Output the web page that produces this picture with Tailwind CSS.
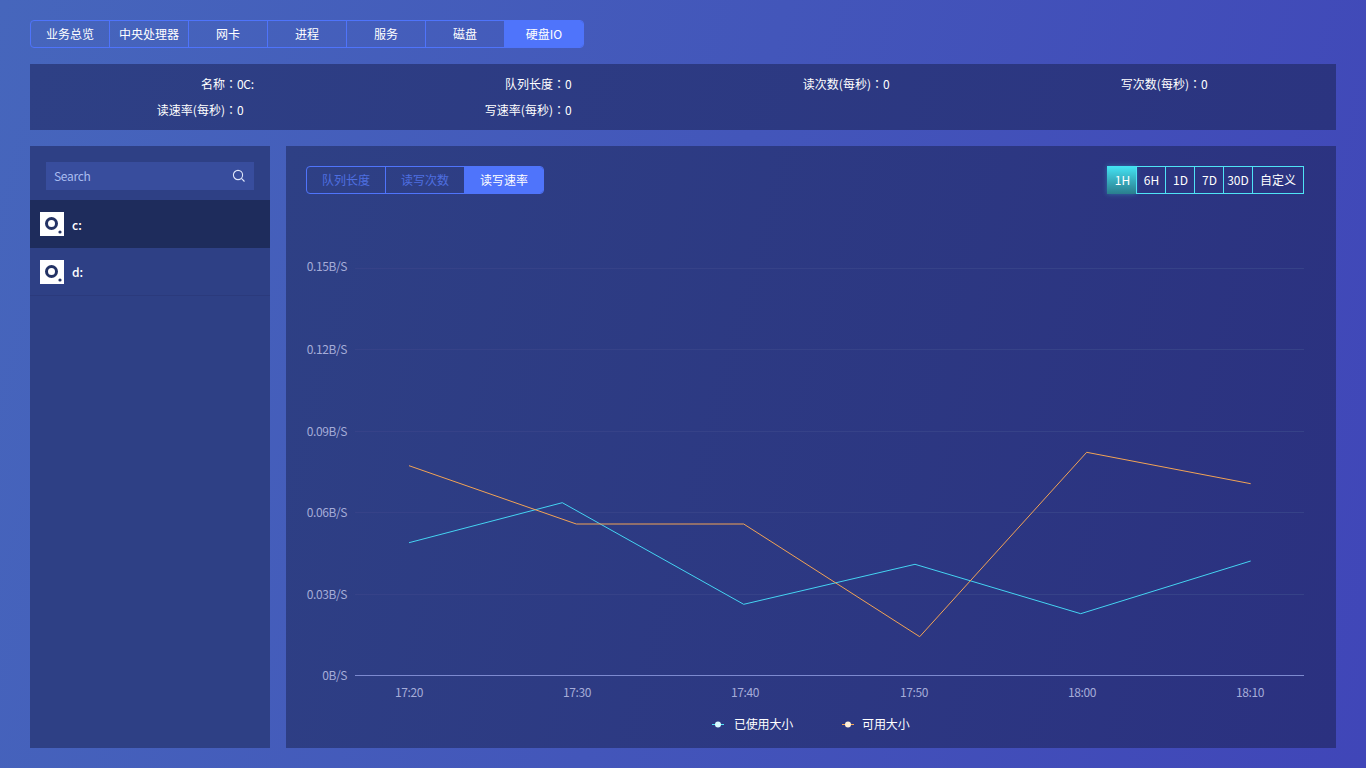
<!DOCTYPE html>
<html lang="zh">
<head>
    <meta charset="UTF-8">
    <title>硬盘IO</title>
    <script src="https://cdn.jsdelivr.net/npm/@tailwindcss/browser@4"></script>
</head>
<body class="h-screen overflow-hidden bg-[linear-gradient(105deg,#4666bc,#4046b8)] font-['Noto_Sans_CJK_SC','Noto_Sans',sans-serif] text-xs text-white">
    <div class="flex h-full flex-col px-[30px] pt-5 pb-5">
        <!-- 顶部导航 -->
        <div class="flex h-7 w-[554px] overflow-hidden rounded border border-[#4f74fb]">
            <div class="flex w-[79px] items-center justify-center border-r border-[#4f74fb]">业务总览</div>
            <div class="flex w-[79px] items-center justify-center border-r border-[#4f74fb]">中央处理器</div>
            <div class="flex w-[79px] items-center justify-center border-r border-[#4f74fb]">网卡</div>
            <div class="flex w-[79px] items-center justify-center border-r border-[#4f74fb]">进程</div>
            <div class="flex w-[79px] items-center justify-center border-r border-[#4f74fb]">服务</div>
            <div class="flex w-[79px] items-center justify-center border-r border-[#4f74fb]">磁盘</div>
            <div class="flex flex-1 items-center justify-center bg-[#4f74fb]">硬盘IO</div>
        </div>

        <!-- 信息栏 -->
        <div class="mt-4 grid grid-cols-[328px_318px_318px_318px] bg-[linear-gradient(105deg,#2e4085,#2b3480)] py-[7px] leading-[26px]">
            <div class="flex"><span class="w-[207px] text-right">名称<span lang="zh-TW" class="font-['Noto_Sans_CJK_TC']">：</span></span><span class="tracking-[-0.3px]">0C:</span></div>
            <div class="flex"><span class="w-[207px] text-right">队列长度<span lang="zh-TW" class="font-['Noto_Sans_CJK_TC']">：</span></span><span>0</span></div>
            <div class="flex"><span class="w-[207px] text-right">读次数(每秒)<span lang="zh-TW" class="font-['Noto_Sans_CJK_TC']">：</span></span><span>0</span></div>
            <div class="flex"><span class="w-[207px] text-right">写次数(每秒)<span lang="zh-TW" class="font-['Noto_Sans_CJK_TC']">：</span></span><span>0</span></div>
            <div class="flex"><span class="w-[207px] text-right">读速率(每秒)<span lang="zh-TW" class="font-['Noto_Sans_CJK_TC']">：</span></span><span>0</span></div>
            <div class="flex"><span class="w-[207px] text-right">写速率(每秒)<span lang="zh-TW" class="font-['Noto_Sans_CJK_TC']">：</span></span><span>0</span></div>
        </div>

        <div class="mt-4 flex min-h-0 flex-1 gap-4">
            <!-- 磁盘列表 -->
            <div class="w-[240px] bg-[#2e4085]">
                <div class="px-4 pt-4 pb-[10px]">
                    <div class="flex h-7 items-center justify-between bg-[#384d9d] pr-[7px] pl-2 text-[#a9bcf0]">
                        <span class="tracking-[-0.3px]">Search</span>
                        <svg class="h-4 w-4" viewBox="0 0 16 16" fill="none" stroke="#dfe6fa" stroke-width="1.1"><circle cx="7" cy="7" r="4.6"/><path d="M10.4 10.4 13.5 13.5"/></svg>
                    </div>
                </div>
                <div class="flex h-12 items-center gap-2 bg-[#1e2c5c] pl-[10px] font-medium">
                    <svg class="h-6 w-6 bg-white" viewBox="0 0 24 24"><circle cx="11.5" cy="11.5" r="5" fill="none" stroke="#233264" stroke-width="3"/><circle cx="20" cy="20" r="1.6" fill="#233264"/></svg>
                    <span class="pt-px">c:</span>
                </div>
                <div class="flex h-12 items-center gap-2 border-b border-[#2b3a7c] pl-[10px] font-medium">
                    <svg class="h-6 w-6 bg-white" viewBox="0 0 24 24"><circle cx="11.5" cy="11.5" r="5" fill="none" stroke="#233264" stroke-width="3"/><circle cx="20" cy="20" r="1.6" fill="#233264"/></svg>
                    <span class="pt-px">d:</span>
                </div>
            </div>

            <!-- 图表 -->
            <div class="relative flex-1 bg-[linear-gradient(105deg,#2e4085,#2b3180)] px-5 pt-5">
                <div class="flex items-start justify-between pr-3">
                    <div class="flex h-7 w-[238px] overflow-hidden rounded border border-[#4f74fb] text-[#4f6fe0]">
                        <div class="flex w-[79px] items-center justify-center border-r border-[#4f74fb]">队列长度</div>
                        <div class="flex w-[79px] items-center justify-center border-r border-[#4f74fb]">读写次数</div>
                        <div class="flex flex-1 items-center justify-center bg-[#4f74fb] text-white">读写速率</div>
                    </div>
                    <div class="flex h-7">
                        <div class="flex w-[29px] items-center justify-center bg-gradient-to-b from-[#44e5f5] to-[#2a7d8d] pl-[2px] shadow-[0_0_5px_rgba(68,229,245,0.35)]">1H</div>
                        <div class="flex w-[29px] items-center justify-center border-y border-l border-[#4fe3f5] pl-px">6H</div>
                        <div class="flex w-[29px] items-center justify-center border-y border-l border-[#4fe3f5] pl-px">1D</div>
                        <div class="flex w-[29px] items-center justify-center border-y border-l border-[#4fe3f5] pl-px">7D</div>
                        <div class="flex w-[29px] items-center justify-center border-y border-l border-[#4fe3f5]">30D</div>
                        <div class="flex w-[52px] items-center justify-center border border-[#4fe3f5]">自定义</div>
                    </div>
                </div>
                <svg class="absolute top-0 left-0 h-[602px] w-[1050px]" viewBox="286 146 1050 602" font-size="12" fill="#a5acd8" letter-spacing="-0.4">
                    <path d="M355 268.5H1304M355 349.5H1304M355 431.5H1304M355 512.5H1304M355 594.5H1304" stroke="#364288"/>
                    <path d="M355 675.5H1304" stroke="#7d8ad0"/>
                    <g text-anchor="end">
                        <text x="347" y="271">0.15B/S</text>
                        <text x="347" y="354">0.12B/S</text>
                        <text x="347" y="436">0.09B/S</text>
                        <text x="347" y="517">0.06B/S</text>
                        <text x="347" y="599">0.03B/S</text>
                        <text x="347" y="680">0B/S</text>
                    </g>
                    <g text-anchor="middle">
                        <text x="409" y="697">17:20</text>
                        <text x="577" y="697">17:30</text>
                        <text x="745" y="697">17:40</text>
                        <text x="914" y="697">17:50</text>
                        <text x="1082" y="697">18:00</text>
                        <text x="1250" y="697">18:10</text>
                    </g>
                    <polyline fill="none" stroke="#45d4f2" points="409,542.7 562.3,502.7 743.7,604.3 915,564.3 1080.7,613.7 1250.7,561"/>
                    <polyline fill="none" stroke="#f2a355" points="409,465.7 576.3,524 743.7,524 919.7,636.7 1086.7,452.3 1250.7,483.7"/>
                    <path d="M712 724.5H724" stroke="#4fe3f5"/><circle cx="718" cy="724.5" r="3" fill="#d8fbff"/>
                    <path d="M842 724.5H854" stroke="#f2a355"/><circle cx="848" cy="724.5" r="3" fill="#fff0d8"/>
                    <text x="734" y="729" fill="#fff" letter-spacing="-0.2">已使用大小</text>
                    <text x="862" y="729" fill="#fff" letter-spacing="-0.1">可用大小</text>
                </svg>
            </div>
        </div>
    </div>
</body>
</html>
